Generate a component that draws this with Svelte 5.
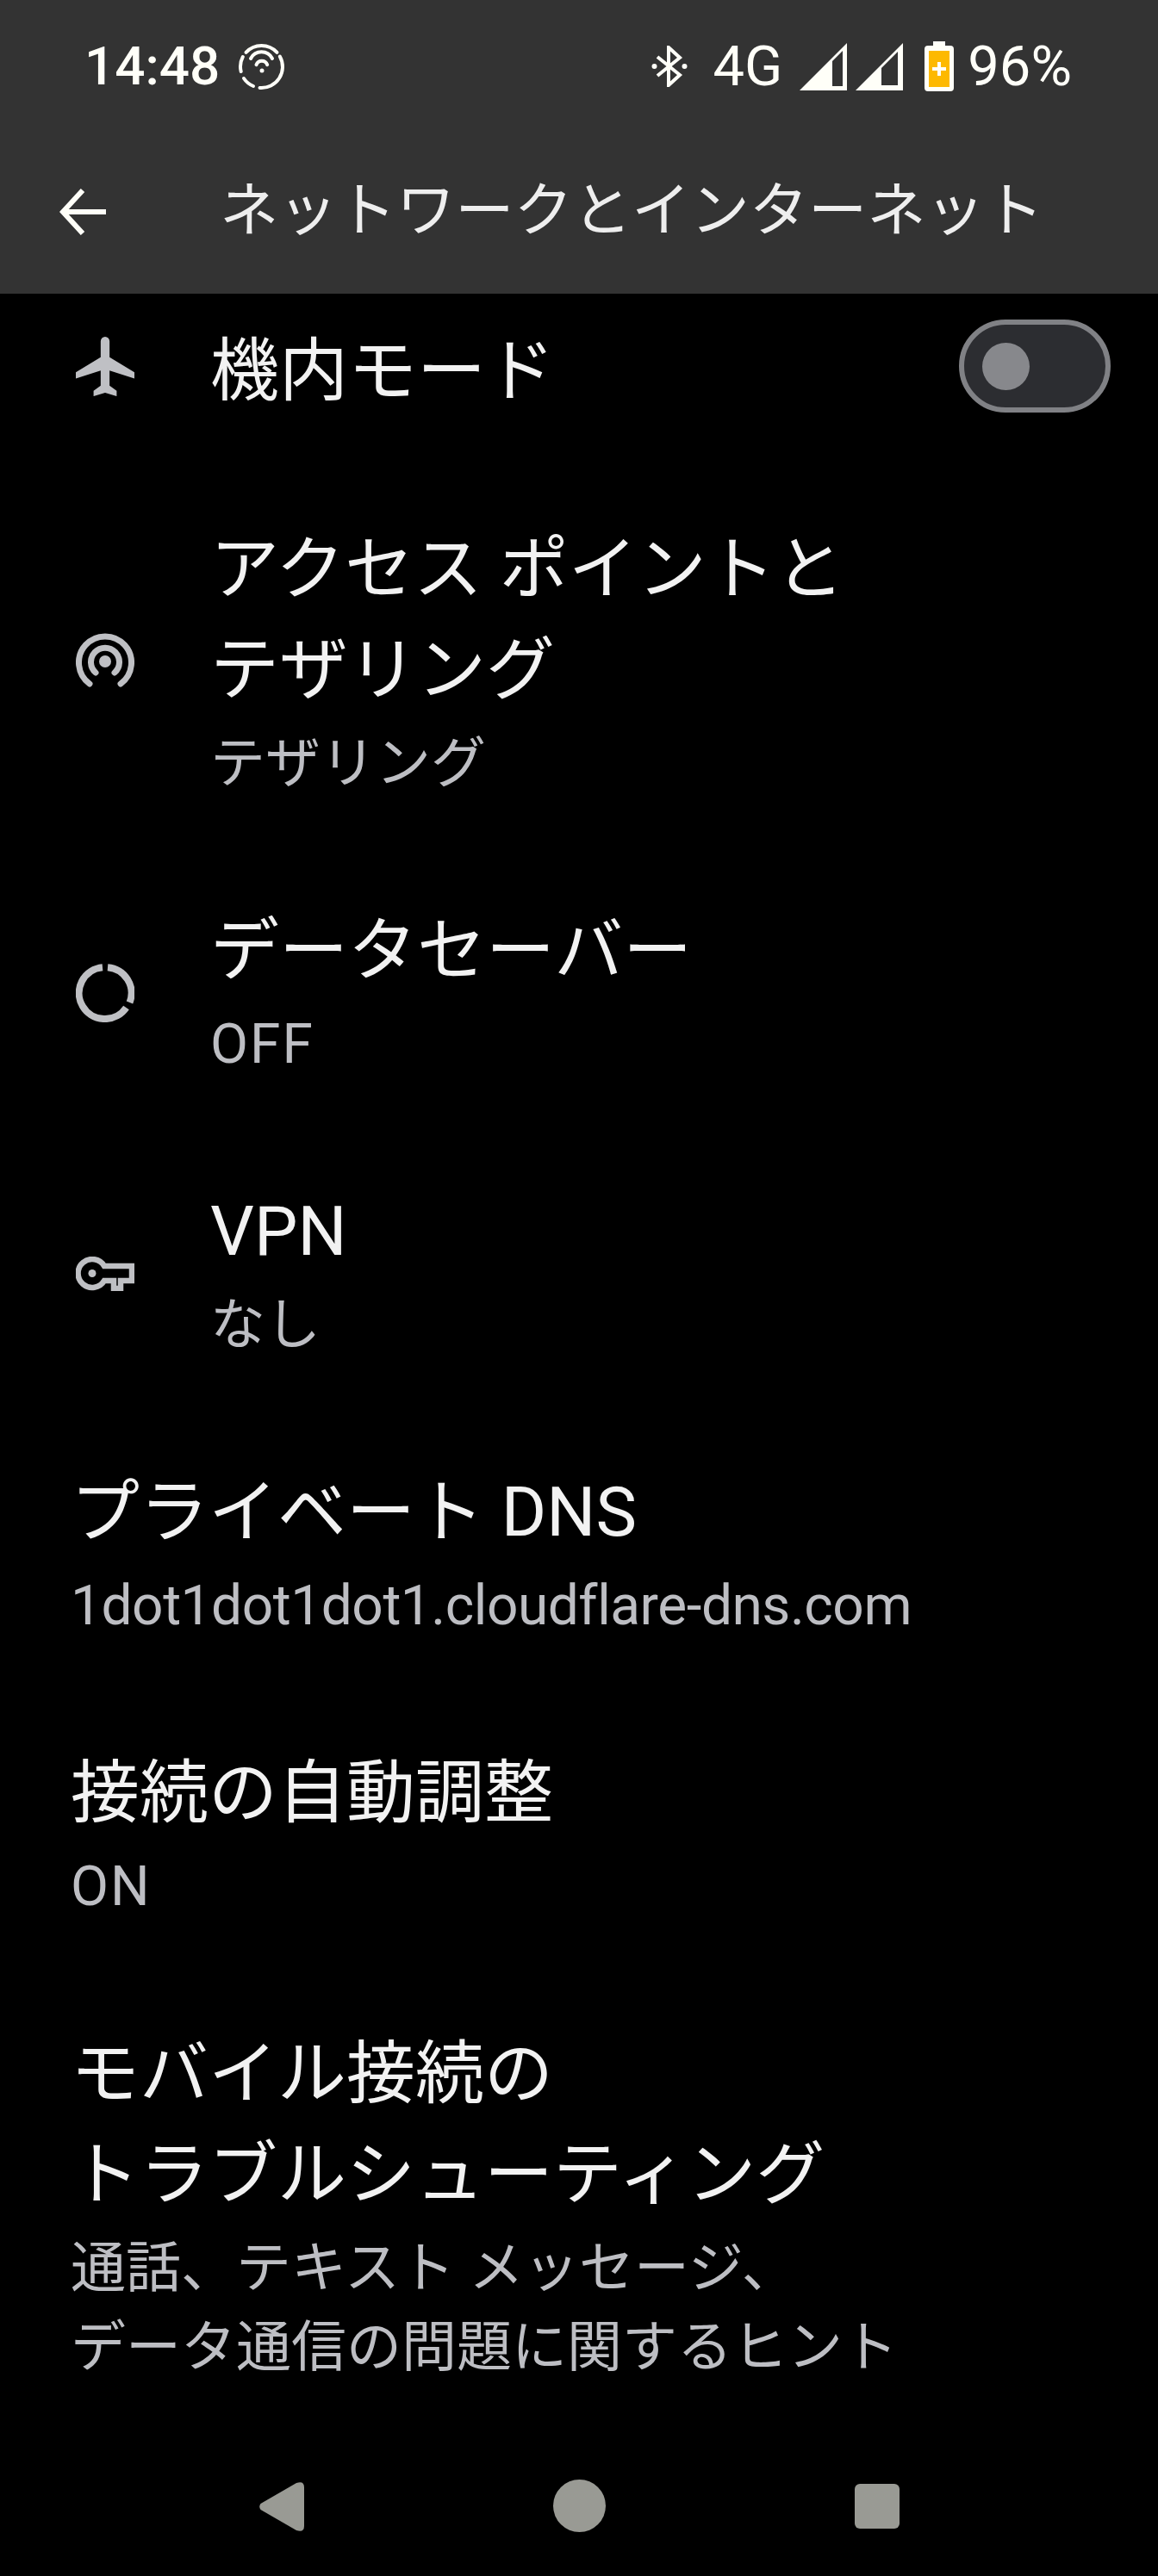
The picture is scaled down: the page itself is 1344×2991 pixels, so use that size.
<script>
	const rows = [
		{ icon: 'plane', title: ['機内モード'], sub: [], toggle: true },
		{ icon: 'hotspot', title: ['アクセス ポイントと', 'テザリング'], sub: ['テザリング'] },
		{ icon: 'saver', title: ['データセーバー'], sub: ['OFF'], subClass: 'wide' },
		{ icon: 'key', title: ['VPN'], sub: ['なし'] },
		{ title: ['プライベート DNS'], sub: ['1dot1dot1dot1.cloudflare-dns.com'], subClass: 'tight' },
		{ title: ['接続の自動調整'], sub: ['ON'], subClass: 'wide' },
		{
			title: ['モバイル接続の', 'トラブルシューティング'],
			sub: ['通話、テキスト メッセージ、', 'データ通信の問題に関するヒント']
		}
	];
</script>

<div class="page">
	<header>
		<div class="status">
			<span class="time">14:48</span>
			<svg class="wifi" viewBox="0 0 55 55" fill="none" stroke="#fffff8" stroke-width="4" stroke-linecap="round">
				<path d="M9.500 10.800A24.500 24.500 0 0 1 45.500 10.800" />
				<path d="M48.800 15.500A24.500 24.500 0 0 1 25.500 52" />
				<path d="M7 41A24.500 24.500 0 0 0 18 50" />
				<path d="M3.700 33A24.500 24.500 0 0 1 5.800 16" />
				<path d="M15 18A14 14 0 0 1 40 18" />
				<path d="M21.500 25.200A6.800 6.800 0 0 1 34.200 25.200" />
				<circle cx="28" cy="32" r="2.500" fill="#fffff8" stroke="none" />
			</svg>
			<span class="spacer"></span>
			<svg class="bt" viewBox="0 0 42 48" fill="none" stroke="#fffff8" stroke-width="4">
				<path d="M7 13 L33 34 L20 46 V2 L33 14 L7 35" />
				<circle cx="3.500" cy="24" r="3" fill="#fffff8" stroke="none" />
				<circle cx="38.500" cy="24" r="3" fill="#fffff8" stroke="none" />
			</svg>
			<span class="net">4G</span>
			<svg class="signal" viewBox="0 0 55 55">
				<path d="M0 55 L55 0 V55 Z" fill="#fffff8" />
				<path d="M38 21 L50 9 V50 H38 Z" fill="#333" />
			</svg>
			<svg class="signal second" viewBox="0 0 55 55">
				<path d="M0 55 L55 0 V55 Z" fill="#fffff8" />
				<path d="M30 29 L49 10 V49 H30 Z" fill="#333" />
			</svg>
			<svg class="battery" viewBox="0 0 34 58">
				<path d="M10 0 H24 V5 H30 Q34 5 34 9 V54 Q34 58 30 58 H4 Q0 58 0 54 V9 Q0 5 4 5 H10 Z" fill="#fffff8" />
				<rect x="5" y="11" width="24" height="42" fill="#fdb900" />
				<path d="M15 24 H19 V30 H25 V34 H19 V40 H15 V34 H9 V30 H15 Z" fill="#fffff8" />
			</svg>
			<span class="pct">96%</span>
		</div>
		<div class="bar">
			<svg class="back" viewBox="0 0 54 54" fill="none" stroke="#fffff8" stroke-width="6">
				<path d="M54 27 H4 M27 2 L4 27 L27 52" />
			</svg>
			<span class="heading">ネットワークとインターネット</span>
		</div>
	</header>

	<main>
		{#each rows as row}
			<div class="row" class:plain={!row.icon}>
				{#if row.icon}
					<div class="icon">
						{#if row.icon === 'plane'}
							<svg viewBox="0 0 66 68" fill="#bfc0c4">
								<path d="M28 6 a5 5 0 0 1 10 0 V24 L66 41 V48 L38 39 V56 L46 62 V68 L33 64 L20 68 V62 L28 56 V39 L0 48 V41 L28 24 Z" />
							</svg>
						{:else if row.icon === 'hotspot'}
							<svg viewBox="0 0 68 68" fill="none" stroke="#bfc0c4" stroke-width="7" stroke-linecap="round">
								<path d="M16 60 A30.500 30.500 0 1 1 52 60" />
								<path d="M23 47 A16.500 16.500 0 1 1 45 47" />
								<circle cx="34" cy="34" r="7" fill="#bfc0c4" stroke="none" />
							</svg>
						{:else if row.icon === 'saver'}
							<svg viewBox="0 0 68 68" fill="none" stroke="#bfc0c4" stroke-width="8">
								<path d="M31 4.200 A30 30 0 1 0 58.500 51" />
								<path d="M37 4.200 A30 30 0 0 1 62.500 45" />
							</svg>
						{:else}
							<svg viewBox="0 0 68 40" fill="none" stroke="#bfc0c4" stroke-width="6.500">
								<path d="M33 11 H65 V28 H52 V37 H44 V28 H33 A16.400 16.400 0 1 1 33 11 Z" />
								<circle cx="19" cy="19.500" r="4.500" fill="#bfc0c4" stroke="none" />
							</svg>
						{/if}
					</div>
				{/if}
				<div class="text">
					{#each row.title as line}
						<div class="title">{line}</div>
					{/each}
					{#if row.sub.length}
						<div class="sub {row.subClass ?? ''}">
							{#each row.sub as line}
								<div>{line}</div>
							{/each}
						</div>
					{/if}
				</div>
				{#if row.toggle}
					<div class="toggle"><span class="knob"></span></div>
				{/if}
			</div>
		{/each}
	</main>

	<nav>
		<svg class="tri" viewBox="0 0 52 57" fill="#999a94">
			<path d="M1.500 25 L43 1 Q52 -2 52 6 V51 Q52 59 43 56 L1.500 32 Q-1 28.500 1.500 25 Z" />
		</svg>
		<span class="dot"></span>
		<span class="sq"></span>
	</nav>
</div>

<style>
	:global(body) {
		margin: 0;
		background: #000;
	}
	.page {
		width: 1344px;
		height: 2991px;
		background: #000;
		font-family: Roboto, 'Noto Sans CJK JP', sans-serif;
		color: #f2f2f2;
		display: flex;
		flex-direction: column;
		overflow: hidden;
	}
	header {
		background: #333;
		height: 341px;
		flex: none;
	}
	.status {
		display: flex;
		align-items: center;
		height: 154px;
		padding: 0 100px 0 98px;
		color: #fffff8;
	}
	.time {
		font-size: 62px;
		font-weight: 500;
		line-height: 1;
	}
	.wifi {
		width: 55px;
		height: 55px;
		margin-left: 21px;
	}
	.spacer {
		flex: 1;
	}
	.bt {
		width: 42px;
		height: 48px;
	}
	.net {
		font-size: 65px;
		margin-left: 30px;
		line-height: 1;
	}
	.signal {
		width: 55px;
		height: 55px;
		margin-left: 20px;
	}
	.signal.second {
		margin-left: 10px;
	}
	.battery {
		width: 34px;
		height: 58px;
		margin-left: 25px;
	}
	.pct {
		font-size: 65px;
		margin-left: 16px;
		line-height: 1;
	}
	.bar {
		display: flex;
		align-items: center;
		height: 184px;
		padding-left: 69px;
	}
	.back {
		width: 54px;
		height: 54px;
	}
	.heading {
		font-size: 68.300px;
		font-weight: 400;
		color: #eee;
		margin-left: 132px;
		margin-bottom: 16px;
		white-space: nowrap;
	}
	main {
		display: flex;
		flex-direction: column;
		gap: 113px;
		padding-top: 19px;
	}
	.row {
		display: flex;
		align-items: center;
		padding-left: 88px;
	}
	.row.plain {
		padding-left: 82px;
	}
	.row:first-child .text {
		padding-top: 13px;
	}
	.icon {
		width: 68px;
		margin-right: 88px;
		flex: none;
		display: flex;
	}
	.icon svg {
		width: 100%;
	}
	.text {
		flex: 1;
	}
	.title {
		font-size: 80px;
		line-height: 117px;
		font-weight: 400;
		white-space: nowrap;
	}
	.sub {
		font-size: 64px;
		line-height: 92px;
		color: #bdbec3;
		font-weight: 400;
		margin-top: 4px;
		white-space: nowrap;
	}
	.sub.tight {
		letter-spacing: -0.47px;
	}
	.sub.wide {
		letter-spacing: 2px;
	}
	.toggle {
		box-sizing: border-box;
		width: 176px;
		height: 108px;
		border: 6px solid #808185;
		border-radius: 54px;
		background: #2c2d31;
		margin-right: 55px;
		display: flex;
		align-items: center;
		padding-left: 21px;
	}
	.knob {
		width: 55px;
		height: 55px;
		border-radius: 50%;
		background: #87888c;
	}
	nav {
		margin-top: auto;
		height: 168px;
		display: flex;
		align-items: flex-start;
		padding-left: 301px;
		box-sizing: border-box;
		flex: none;
	}
	.tri {
		width: 52px;
		height: 57px;
		margin-top: 59px;
	}
	.dot {
		width: 61px;
		height: 61px;
		border-radius: 50%;
		background: #999a94;
		margin-left: 289px;
		margin-top: 56px;
	}
	.sq {
		width: 52px;
		height: 52px;
		border-radius: 6px;
		background: #999a94;
		margin-left: 289px;
		margin-top: 61px;
	}
</style>
